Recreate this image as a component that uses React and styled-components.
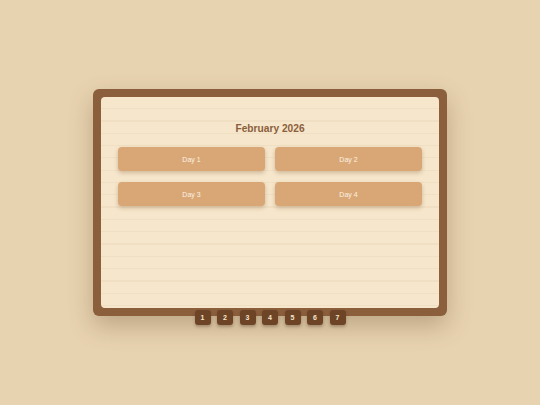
import React from "react";
import styled, { createGlobalStyle } from "styled-components";

const GlobalStyle = createGlobalStyle`
  html, body {
    margin: 0;
    padding: 0;
    background: #e8d3b0;
    font-family: "Liberation Sans", Arial, sans-serif;
  }
  #root {
    width: 540px;
    height: 405px;
  }
`;

const Page = styled.div`
  width: 540px;
  height: 405px;
  display: flex;
  align-items: center;
  justify-content: center;
`;

const Frame = styled.div`
  position: relative;
  width: 354px;
  height: 227px;
  box-sizing: border-box;
  padding: 8px;
  background: #8b5e3c;
  border-radius: 6px;
  box-shadow: 0 10px 24px rgba(90, 60, 30, 0.3);
`;

const Paper = styled.div`
  height: 100%;
  box-sizing: border-box;
  padding: 25px 17px 0;
  border-radius: 4px;
  background-color: #f6e6cb;
  background-image: repeating-linear-gradient(
    to bottom,
    transparent 0,
    transparent 11px,
    #f0dfc2 11px,
    #f0dfc2 12.3px
  );
`;

const Title = styled.h2`
  margin: 0 0 11px;
  text-align: center;
  font-size: 10.2px;
  font-weight: bold;
  color: #8b5e3c;
  line-height: 14px;
`;

const DayGrid = styled.div`
  display: grid;
  grid-template-columns: 1fr 1fr;
  column-gap: 10px;
  row-gap: 11px;
`;

const DayButton = styled.button`
  height: 24px;
  border: none;
  border-radius: 4px;
  background: #d9a775;
  color: #fbf1e2;
  font-family: "Liberation Sans", Arial, sans-serif;
  font-size: 7px;
  box-shadow: 0 2px 4px rgba(120, 80, 40, 0.3);
  cursor: pointer;
`;

const Tabs = styled.div`
  position: absolute;
  left: 0;
  right: 0;
  bottom: -9px;
  display: flex;
  justify-content: center;
  gap: 6.5px;
`;

const Tab = styled.div`
  width: 16px;
  height: 15px;
  border-radius: 3px;
  background: #6e4427;
  color: #f5e6cc;
  font-size: 7px;
  font-weight: bold;
  display: flex;
  align-items: center;
  justify-content: center;
  box-shadow: 0 2px 3px rgba(60, 35, 15, 0.3);
`;

const days = ["Day 1", "Day 2", "Day 3", "Day 4"];
const tabs = [1, 2, 3, 4, 5, 6, 7];

const App = () => {
  return (
    <Page>
      <GlobalStyle />
      <Frame>
        <Paper>
          <Title>February 2026</Title>
          <DayGrid>
            {days.map((d) => (
              <DayButton key={d}>{d}</DayButton>
            ))}
          </DayGrid>
        </Paper>
        <Tabs>
          {tabs.map((t) => (
            <Tab key={t}>{t}</Tab>
          ))}
        </Tabs>
      </Frame>
    </Page>
  );
};

export default App;
